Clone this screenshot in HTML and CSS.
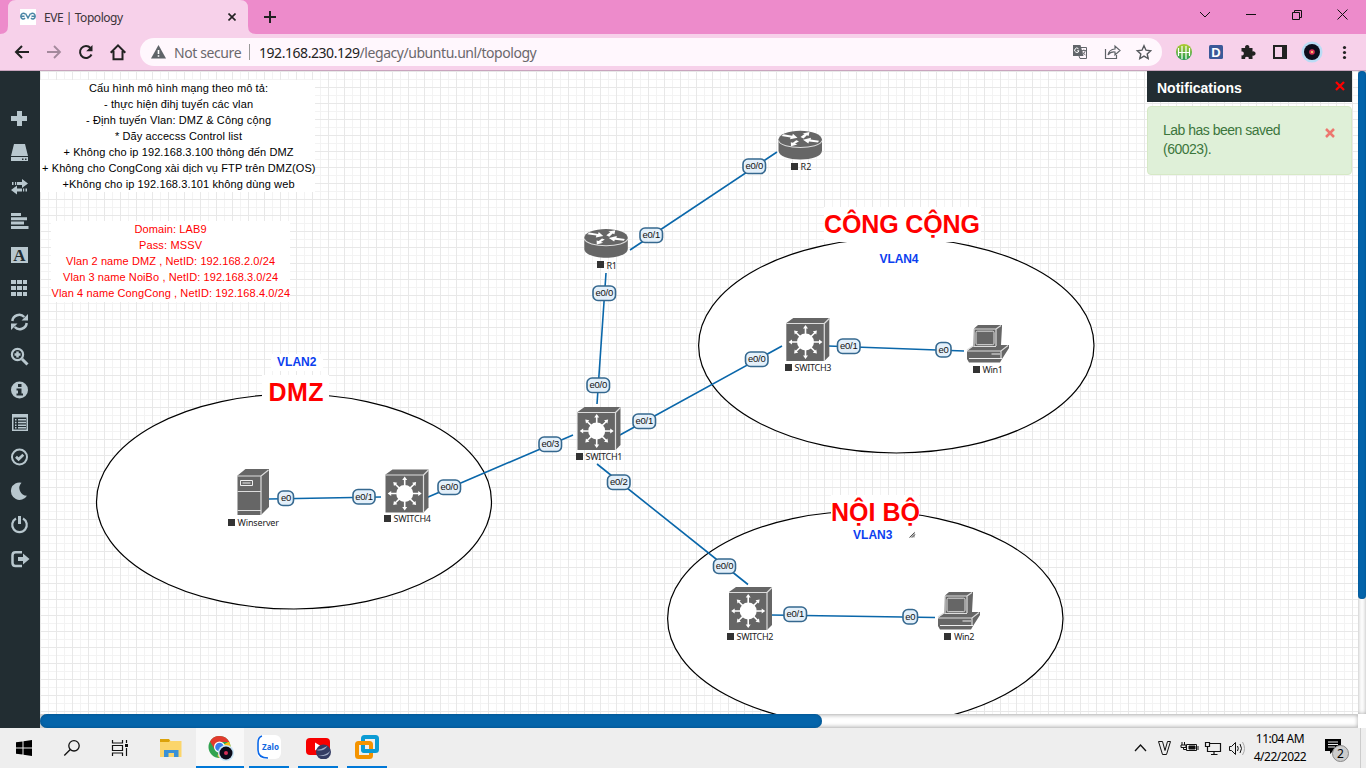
FILE: index.html
```html
<!DOCTYPE html>
<html lang="en">
<head>
<meta charset="utf-8">
<title>EVE | Topology</title>
<link rel="stylesheet" href="styles.css">
</head>
<body>
<div class="tabs">
  <svg class="tab-shape" width="262" height="34" viewBox="0 0 262 34"><path fill="#f7d1ea" d="M0 34q8 0 8-8V8q0-8 8-8h224q8 0 8 8v18q0 8 8 8z"/></svg>
  <div class="tab">
    <svg width="16" height="16" viewBox="0 0 16 16"><path fill="#fff" d="M0 0h16v16H0z"/><g fill="none" stroke="#4a86a5" stroke-width="1.5"><path d="M5.300 5C3 3 .8 5 .8 7.300S3.300 11 5 9M1 7.300h3.500M5.500 4.500 8 9l2.500-4.500M10.700 5c2.300-2 4.500 0 4.500 2.300S12.700 11 11 9M11.500 7.300H15"/></g></svg>
    <span class="tab-title">EVE | Topology</span>
    <svg class="tab-close" width="8" height="8" viewBox="0 0 8 8" stroke="#222" stroke-width="1.6"><path d="m.5.500 7 7M7.500.500l-7 7"/></svg>
  </div>
  <svg class="new-tab" width="12" height="12" viewBox="0 0 12 12" stroke="#222" stroke-width="2"><path d="M6 0v12M0 6h12"/></svg>
  <svg class="win-controls" width="150" height="16" viewBox="0 0 150 16" fill="none" stroke="#111"><path d="m1 3 5 5 5-5M47 5.500h10M93.500 3.500h7v7h-7zM95.500 3.500v-2h7v7h-2M138.500.5l10 10M148.500.5l-10 10"/></svg>
</div>
<div class="toolbar">
  <div class="nav">
    <svg width="16" height="16" viewBox="0 0 16 16" fill="none" stroke="#222" stroke-width="2"><path d="M15 8H2M8 2 2 8l6 6"/></svg>
    <svg width="16" height="16" viewBox="0 0 16 16" fill="none" stroke="#a3899c" stroke-width="1.800"><path d="M1 8h13M8 2l6 6-6 6"/></svg>
    <svg width="16" height="16" viewBox="0 0 16 16"><path fill="none" stroke="#222" stroke-width="2" d="M13.500 10.500A6 6 0 1 1 12.500 4"/><path fill="#222" d="M14.500 1v6.300H8.200z"/></svg>
    <svg width="16" height="18" viewBox="0 0 16 18" fill="none" stroke="#222" stroke-width="2"><path d="M.7 9.700 8 2.300l7.300 7.400M3.500 8v8.200h9V8"/></svg>
  </div>
  <div class="address">
    <svg width="15" height="14" viewBox="0 0 15 14"><path fill="#5f6368" d="M7.500 0 15 13.500H0z"/><path fill="#fff" d="M6.700 5h1.600v4H6.700zM6.700 10.200h1.600v1.600H6.700z"/></svg>
    <span class="secure">Not secure</span><span class="divider"></span>
    <span class="url"><b>192.168.230.129</b>/legacy/ubuntu.unl/topology</span>
    <svg class="addr-icons" width="80" height="16" viewBox="0 0 80 16"><path fill="#62656a" d="M1 1h7.500l3 11H1z"/><path d="M9 3.500h5.500v11H8l-1-2.500" fill="none" stroke="#62656a"/><path d="M6.500 4.800a2.200 2.200 0 1 0 .5 2H5.200" fill="none" stroke="#fff"/><path d="M9.500 6.500H14M11.800 5.500v1M13.200 6.500c0 2-1.800 3.800-3 4.500M10.500 7.500c.5 1.500 1.500 3 3 3.500" fill="none" stroke="#62656a" stroke-width=".9"/><path d="M33.500 5v9.500h11V11M36 11q1-5.500 7-6V2l5 4.500-5 4.500V8q-4.500-.5-7 3z" fill="none" stroke="#5f6368" stroke-width="1.200"/><path d="m72 1.800 2 4.400 4.700.5-3.500 3.200 1 4.600-4.200-2.400-4.200 2.400 1-4.600-3.500-3.200 4.700-.5z" fill="none" stroke="#55585c" stroke-width="1.400"/></svg>
  </div>
  <svg class="extensions" width="180" height="24" viewBox="0 0 180 24">
    <defs><linearGradient id="lime" x1="0" y1="0" x2="0" y2="1"><stop stop-color="#b2cd31"/><stop offset="1" stop-color="#219b51"/></linearGradient></defs>
    <circle cx="12" cy="12" r="8" fill="url(#lime)"/><path d="M6.500 8v8M10 6v13M14 6v13M17.500 8v8M6.500 12.500h11" stroke="#fff" stroke-width="1.200" fill="none"/>
    <rect x="37" y="5" width="14" height="14" rx="1.500" fill="#3b5998"/><text x="44" y="16.500" text-anchor="middle" class="ext-letter">D</text>
    <path fill="#222" d="M70 8h3.200a2.200 2.200 0 1 1 4 0h3.300v3.500a2.200 2.200 0 1 1 0 4V19h-3.800a1.800 1.800 0 1 0-3.500 0H69.500v-3.700a1.900 1.900 0 1 0 0-3.700V8z"/>
    <path d="M102 6h12v12h-12z" fill="#f7d1ea" stroke="#222" stroke-width="2"/><path d="M110 5h5v14h-5z" fill="#222"/>
    <circle cx="140" cy="12" r="10.500" fill="#badcf5"/><circle cx="140" cy="12" r="8" fill="#0d0d1c"/><circle cx="140" cy="12" r="2.800" fill="#db3157"/><circle cx="140" cy="12" r="1" fill="#ffe36d"/>
    <g fill="#222"><circle cx="172.500" cy="7.500" r="1.600"/><circle cx="172.500" cy="12.500" r="1.600"/><circle cx="172.500" cy="17.500" r="1.600"/></g>
  </svg>
</div>
<div class="workspace">
  <aside class="sidebar">
    <svg viewBox="0 0 18 18"><path d="M7 1h5v5h5v5h-5v5H7v-5H1V6h6z"/></svg>
    <svg viewBox="0 0 18 18"><path d="M4 0h11l3 12H1zM1 13h17v4H1z"/><path d="M12 14.500h1.500V16H12zM15 14.500h1.500V16H15z" fill="#222d32"/></svg>
    <svg viewBox="0 0 18 18"><path d="M12 1 18 5.500 12 10V7H7V4h5zM5 4h1.200v3H5zM2 4h1.500v3H2zM7 7.500 1 12l6 4.500V13.500h5v-3H7zM13 10.500h1.200v3H13zM15.500 10.500H17v3h-1.500z"/></svg>
    <svg viewBox="0 0 18 18"><path d="M1 1h10v3H1zM1 5.300h16v3H1zM1 9.600h13v3H1zM1 14h17.500v3H1z"/></svg>
    <svg viewBox="0 0 18 18"><path d="M1 1h17v16H1z"/><text x="9.500" y="15" text-anchor="middle" class="font-letter">A</text></svg>
    <svg viewBox="0 0 18 18"><path d="M1 1h5v4H1zM7 1h5v4H7zM13 1h4v4h-4zM1 7h5v4H1zM7 7h5v4H7zM13 7h4v4h-4zM1 13h5v4H1zM7 13h5v4H7zM13 13h4v4h-4z"/></svg>
    <svg viewBox="0 0 18 18"><g fill="none" stroke="#b8c7ce" stroke-width="2.500"><path d="M2.300 8a7 7 0 0 1 12-4M16.700 10a7 7 0 0 1-12 4"/></g><path d="M18 1v6.500h-6.500zM1 17v-6.500h6.500z"/></svg>
    <svg viewBox="0 0 18 18"><g fill="none" stroke="#b8c7ce"><circle cx="7.500" cy="7.500" r="5.600" stroke-width="2.200"/><path d="m12 12 5.500 5.500" stroke-width="3"/><path d="M4.500 7.500h6M7.500 4.500v6" stroke-width="2.500"/></g></svg>
    <svg viewBox="0 0 18 18"><circle cx="9.500" cy="9" r="8.500"/><path fill="#222d32" d="M8 3h3.500v3H8zM6.500 7.500h5v5H13v2H6.500v-2H8v-3H6.500z"/></svg>
    <svg viewBox="0 0 18 18"><path fill-rule="evenodd" d="M2 0h16v17H2zM3.500 3.500v12h13v-12z"/><path d="M5 5h1.500v1.500H5zM8 5h8v1.500H8zM5 7.700h1.500v1.500H5zM8 7.700h8v1.500H8zM5 10.400h1.500v1.500H5zM8 10.400h8v1.500H8zM5 13h1.500v1.500H5zM8 13h8v1.500H8z"/></svg>
    <svg viewBox="0 0 18 18"><g fill="none" stroke="#b8c7ce"><circle cx="9.500" cy="9" r="7.500" stroke-width="2"/><path d="m6 8.700 2.600 2.600 4.700-4.600" stroke-width="2.700"/></g></svg>
    <svg viewBox="0 0 18 18"><path d="M11.500.7a8.700 8.700 0 1 0 5.500 13A7.700 7.700 0 0 1 11.500.7z"/></svg>
    <svg viewBox="0 0 18 18"><g fill="none" stroke="#b8c7ce" stroke-width="2.200"><path d="M6 2.500a7.300 7.300 0 1 0 7 0"/><path d="M9.500 0v8" stroke-width="3"/></g></svg>
    <svg viewBox="0 0 18 18"><path d="M12 2.300H5.500q-3 0-3 3V13q0 3 3 3H12" fill="none" stroke="#b8c7ce" stroke-width="2.500"/><path d="M8 7h5V3.500L19.500 9 13 14.500V11H8z"/></svg>
  </aside>
  <main class="board">
    <svg class="topology" width="1318" height="643" viewBox="40 71 1318 643">
      <defs>
        <pattern id="grid" x="0" y="7" width="16" height="16" patternUnits="userSpaceOnUse"><path d="M0 8h16v1H0zM0 0h1v16H0z" fill="#f3f3f3"/><path d="M0 0h16v1H0zM8 0h1v16H8z" fill="#e8e8e8"/></pattern>
        <symbol id="switch" viewBox="0 0 43 43" overflow="visible">
          <path d="M0 5 7 0h36v38l-5 5H0z" fill="#666"/><path d="M0 5.500h38V43M38 5.500 43 .5" fill="none" stroke="#ddd" stroke-width="1.200"/>
          <g transform="translate(19.200 24)" fill="#fff"><circle r="8.500"/><g id="cross"><path d="M-.8-8h1.600v-5.500h1.700L0-17l-2.500 3.500h1.700z"/><path d="M-.8 8h1.600v5.500h1.700L0 17l-2.500-3.500h1.700z"/><path d="M8-.8v1.600h5.500v1.700L17 0l-3.500-2.500v1.700z"/><path d="M-8-.8v1.600h-5.500v1.700L-17 0l3.500-2.500v1.700z"/></g><use href="#cross" transform="rotate(45) scale(.95)"/></g>
        </symbol>
        <symbol id="router" viewBox="0 0 44 30" overflow="visible">
          <path d="M0 9v11c0 12 43.500 12 43.500 0V9z" fill="#666"/><ellipse cx="21.700" cy="9" rx="21.700" ry="8.700" fill="#666"/><path d="M0 10c2 9.300 41.500 9.300 43.500 0" fill="none" stroke="#ddd" stroke-width="1.100"/>
          <path fill="#fff" d="m5 3.800 8.800 1.500.6-2L19 7.200l-7.500 1.500.6-1.800L3 5.500zM39.500 12l-9-1-.6 1.900-5.400-3.700 8-1.900-.4 1.800 8.400 1.200zM22 6.500l4-3-2-.6 7-1.400-.9 4-1.700-.8L25 8zM20.500 10.800l-4 2.500 2.500.8-6.500 1.600-.2-4 2.100.6 3.300-2.500z"/>
        </symbol>
        <symbol id="pc" viewBox="0 0 42 38" overflow="visible">
          <path d="M7 3.500 11 0h24v2l-1 18h8v3L35 34l-2 3.500H2L0 34v-8l6-5z" fill="#666"/>
          <path d="M7 4h22v17M29 4l5-3.500M0 26h34l7-5.500M34 26v8M7 4v17.500h22M0 25l6-4" fill="none" stroke="#ddd" stroke-width="1.200"/><rect x="9" y="6.200" width="18" height="13.500" rx="1.500" fill="none" stroke="#ddd"/><path d="M2 33.500h33M24.500 29H33" stroke="#eee" stroke-width="1.200"/>
        </symbol>
        <symbol id="server" viewBox="0 0 32 46" overflow="visible">
          <path d="M.5 6.500 8.500 0H32v38l-8 8H.5z" fill="#666"/><path d="M.5 7H24v39M24 7l7.500-6M.5 22.500H24M.5 41.500H24" fill="none" stroke="#ddd" stroke-width="1.200"/><path d="M3.500 11.500h12v5h-12zM5.500 14h8" fill="none" stroke="#eee"/>
        </symbol>
      </defs>
      <path fill="#fff" d="M40 71h1318v643H40z"/><path fill="url(#grid)" d="M40 71h1318v643H40z"/>
      <g fill="#fff" stroke="#000" stroke-width="1.200"><ellipse cx="294" cy="501.500" rx="197.500" ry="107.500"/><ellipse cx="896.300" cy="345.500" rx="197.700" ry="107.500"/><ellipse cx="865.300" cy="618.500" rx="197.700" ry="107.500"/></g>
      <path fill="#fff" d="M40 80h275v112H40zM51 221h239v81H51zM262 375h67v35h-67zM824 207h157v35H824zM831 495h88v35h-88zM271 354h52v17h-52z"/>
      <g class="note">
        <text x="89" y="92" textLength="179">Cấu hình mô hình mạng theo mô tả:</text>
        <text x="104" y="108" textLength="149">- thực hiện đihj tuyến các vlan</text>
        <text x="86" y="124" textLength="185">- Định tuyến Vlan: DMZ &amp; Công cộng</text>
        <text x="115" y="140" textLength="127">* Dãy accecss Control list</text>
        <text x="63.500" y="156" textLength="230">+ Không cho ip 192.168.3.100 thông đến DMZ</text>
        <text x="42" y="172" textLength="273.500">+ Không cho CongCong xài dịch vụ FTP trên DMZ(OS)</text>
        <text x="62.500" y="188" textLength="232">+Không cho ip 192.168.3.101 không dùng web</text>
      </g>
      <g class="note red">
        <text x="134.500" y="233" textLength="72">Domain: LAB9</text>
        <text x="139" y="249" textLength="63">Pass: MSSV</text>
        <text x="66" y="265" textLength="209">Vlan 2 name DMZ , NetID: 192.168.2.0/24</text>
        <text x="63" y="281" textLength="215">Vlan 3 name NoiBo , NetID: 192.168.3.0/24</text>
        <text x="51.500" y="297" textLength="238.500">Vlan 4 name CongCong , NetID: 192.168.4.0/24</text>
      </g>
      <g class="zone"><text x="268.500" y="401" textLength="55">DMZ</text><text x="824" y="233" textLength="156">CÔNG CỘNG</text><text x="831" y="521" textLength="89">NỘI BỘ</text></g>
      <g class="vlan"><text x="277" y="366" textLength="39.500">VLAN2</text><text x="879.500" y="263" textLength="39">VLAN4</text><text x="853" y="539" textLength="39.500">VLAN3</text></g>
      <path d="m909 537.500 6-6v6z" fill="#bbb"/><path d="m909.500 537.500 5-5M912 537.500l3-3" stroke="#555"/>
      <g stroke="#0a67aa" stroke-width="1.600"><path d="M777 152 630 250M606 273 597 404M619 435.500 782 346M828 346 964 351M573 435 427 497.500M381 497 269 499M597 464 748 584.500M771 615 935 617.500"/></g>
      <use href="#router" x="778.500" y="130.500" width="44" height="30"/><use href="#router" x="584.300" y="228.700" width="44" height="30"/>
      <use href="#switch" x="577.500" y="407" width="43" height="43"/><use href="#switch" x="786.300" y="318" width="43" height="43"/><use href="#switch" x="385.500" y="469.500" width="43" height="43"/><use href="#switch" x="729" y="587" width="43" height="43"/>
      <use href="#pc" x="967" y="325" width="42" height="38"/><use href="#pc" x="938" y="592" width="42" height="38"/><use href="#server" x="237" y="469" width="32" height="46"/>
      <path fill="#333" d="M791 163h7v7h-7zM597 261h7v7h-7zM576 453h7v7h-7zM785 364h7v7h-7zM973 366h7v7h-7zM228 519h7v7h-7zM384 515h7v7h-7zM727 633h7v7h-7zM944 633h7v7h-7z"/>
      <g class="node-name"><text x="800.500" y="170" textLength="11">R2</text><text x="606.500" y="269" textLength="10.500">R1</text><text x="585.500" y="460" textLength="37">SWITCH1</text><text x="794.500" y="371" textLength="37">SWITCH3</text><text x="982.500" y="373" textLength="20.500">Win1</text><text x="237.500" y="526" textLength="41.500">Winserver</text><text x="393.500" y="522" textLength="37.500">SWITCH4</text><text x="736.500" y="640" textLength="37">SWITCH2</text><text x="954" y="640" textLength="20.500">Win2</text></g>
      <g fill="#e4f0fa" stroke="#35688f" stroke-width="1.600">
        <rect x="743" y="159" width="22.500" height="14.500" rx="5"/><rect x="640" y="228" width="22.500" height="14.500" rx="5"/><rect x="593" y="286" width="22.500" height="14.500" rx="5"/><rect x="587" y="378" width="22.500" height="14.500" rx="5"/><rect x="633" y="414" width="22.500" height="14.500" rx="5"/><rect x="745.500" y="352" width="22.500" height="14.500" rx="5"/><rect x="837.500" y="339" width="22.500" height="14.500" rx="5"/><rect x="936" y="342.500" width="15" height="14.500" rx="5"/><rect x="539" y="437" width="22.500" height="14.500" rx="5"/><rect x="438" y="480" width="22.500" height="14.500" rx="5"/><rect x="353" y="489.500" width="22" height="14.500" rx="5"/><rect x="278" y="491" width="15.500" height="14.500" rx="5"/><rect x="607.500" y="475" width="22.500" height="14.500" rx="5"/><rect x="713.500" y="559" width="22" height="14.500" rx="5"/><rect x="784" y="607" width="22.500" height="14.500" rx="5"/><rect x="903" y="609.500" width="14.500" height="14.500" rx="5"/>
      </g>
      <g class="port"><text x="754.300" y="169">e0/0</text><text x="651.300" y="238">e0/1</text><text x="604.300" y="296">e0/0</text><text x="598.300" y="388">e0/0</text><text x="644.300" y="424">e0/1</text><text x="756.800" y="362">e0/0</text><text x="848.800" y="349">e0/1</text><text x="943.500" y="353">e0</text><text x="550.300" y="447">e0/3</text><text x="449.300" y="490">e0/0</text><text x="364" y="500">e0/1</text><text x="286" y="501">e0</text><text x="618.800" y="485">e0/2</text><text x="724.500" y="569">e0/0</text><text x="795.300" y="617">e0/1</text><text x="910.300" y="620">e0</text></g>
    </svg>
    <div class="h-scroll"><div class="h-thumb"></div></div>
    <section class="notifications">
      <header class="notice-head">Notifications<svg width="10" height="10" viewBox="0 0 10 10"><path d="m1 1 8 8M9 1 1 9" stroke="red" stroke-width="2.300"/></svg></header>
      <div class="notice"><span>Lab has been saved<br>(60023).</span><svg width="10" height="10" viewBox="0 0 10 10"><path d="m1 1 8 8M9 1 1 9" stroke="#ed776f" stroke-width="2.500"/></svg></div>
    </section>
  </main>
  <div class="v-scroll"><div class="v-thumb"></div></div>
</div>
<footer class="taskbar">
  <div class="task"><svg width="16" height="16" viewBox="0 0 16 16"><path d="m0 2.300 6.500-.9v6.100H0zM7.500 1.200 16 0v7.500H7.500zM0 8.500h6.500v6.100L0 13.700zM7.500 8.500H16V16l-8.500-1.200z"/></svg></div>
  <div class="task"><svg width="18" height="18" viewBox="0 0 18 18" fill="none" stroke="#111" stroke-width="1.300"><circle cx="11" cy="6.800" r="5.200"/><path d="m7.300 10.500-6 6"/></svg></div>
  <div class="task"><svg width="18" height="18" viewBox="0 0 18 18" fill="none" stroke="#111"><path d="M1.500 1v3h10V1M1.500 17v-3h10v3M1.500 6.500h10v5h-10zM15.500 1v3M15.500 9v8" stroke-width="1.200"/><path d="M14 5h3v3h-3z" fill="#111" stroke="none"/></svg></div>
  <div class="task files"><svg width="22" height="19" viewBox="0 0 22 19"><path fill="#fbd56b" d="M0 1h9l2 1h10.500v16H0z"/><path fill="#dba20a" d="M0 0h9l1 1.500L9 3H0z"/><path fill="#3a91d7" d="M4 18v-7h14.500v7H14v-4H8.500v4z"/></svg></div>
  <div class="task chrome"><svg width="28" height="28" viewBox="0 0 28 28"><circle cx="13.500" cy="14" r="11" fill="#31a350"/><path fill="#fbc116" d="M13.500 14 23 8.500A11 11 0 0 1 13.500 25l-2-2z"/><path fill="#e33b2e" d="M4 8.500A11 11 0 0 1 23.300 9H13.500l-5 7z"/><circle cx="13.500" cy="14" r="5.500" fill="#fff"/><circle cx="13.500" cy="14" r="4.300" fill="#3a7cec"/><circle cx="20" cy="20" r="8" fill="#c8e4f5"/><circle cx="20" cy="20" r="6.500" fill="#0b0b1a"/><circle cx="20" cy="20" r="2" fill="#d52c56"/></svg></div>
  <div class="task active"><svg width="24" height="24" viewBox="0 0 24 24"><rect width="24" height="24" rx="6" fill="#fff"/><path d="M5 1Q1 2 1 8v7q0 8 10 8" fill="none" stroke="#0b68e8" stroke-width="1.600"/><text x="13.500" y="14.500" textLength="17" text-anchor="middle" class="zalo">Zalo</text></svg></div>
  <div class="task active"><svg width="26" height="24" viewBox="0 0 26 24"><rect x="1" y="3" width="24" height="17" rx="4" fill="#f70000"/><path d="m10 7.500 6.500 4L10 15.500z" fill="#fff"/><circle cx="18.500" cy="17" r="7.500" fill="#343c64"/><path d="M11.500 15q6-1 11-4-4 6-11 4zM13 20q8 1 12-4-2 7-12 4z" fill="#a0abc7"/></svg></div>
  <div class="task active"><svg width="24" height="24" viewBox="0 0 24 24" fill="none" stroke-width="4"><rect x="8" y="2" width="14" height="14" rx="1.500" stroke="#0b9bd4"/><rect x="2" y="8" width="14" height="14" rx="1.500" stroke="#f49300"/><path d="M8 11v3q0 2 2 2h8" stroke="#0b9bd4"/></svg></div>
  <svg class="tray" width="112" height="20" viewBox="0 0 112 20" fill="none" stroke="#111">
    <path d="m1 13 5.500-6 5.500 6" stroke-width="1.300"/><path d="M24.500 3.500h4l2.500 9 2.500-9h3l-4 13h-4z"/>
    <path d="M52.500 6.500h10v6h-10zM64 8v4M48 4v3M50.500 4v3M47 7h5v2.500h-5zM49.500 9.500v2h3"/><path d="M55 8h6v3h-6z" fill="#111"/>
    <path d="M75.500 5.500h11v8h-13v-5M80 13.500v3M77 16.500h6.500M71.500 4.500h4v4h-4z" stroke-width="1.200"/>
    <path d="M95.500 8.500h2l4-4v12l-4-4h-2zM103.500 8q1.500 2.500 0 5M106 6q3 4.500 0 9"/><path d="M108.500 4q4 6.500 0 13" stroke="#aaa"/>
  </svg>
  <div class="clock"><span>11:04 AM</span><span>4/22/2022</span></div>
  <svg class="action" width="26" height="28" viewBox="0 0 26 28"><path d="M1 5h16v12H9l-3 3v-3H1z"/><path d="M4 8h10M4 10.500h10M4 13h7" stroke="#eee" stroke-width="1.200"/><circle cx="16.500" cy="19.500" r="8" fill="#ccc" stroke="#888"/><text x="16.500" y="24" text-anchor="middle" class="badge">2</text></svg>
  <span class="show-desktop"></span>
</footer>
</body>
</html>
```
FILE: styles.css
```css
* { box-sizing: border-box; }
body { margin: 0; width: 1366px; height: 768px; overflow: hidden; display: flex; flex-direction: column; font-family: "Liberation Sans", Arial, sans-serif; }
svg { display: block; flex: none; }
.tabs { height: 34px; background: #ed8bcb; display: grid; grid-template-columns: 262px 1fr 162px; align-items: center; }
.tab-shape, .tab { grid-area: 1 / 1; }
.tab { display: flex; align-items: center; padding-left: 20px; font: 12px "Noto Sans", sans-serif; color: #3c3439; }
.tab-title { margin-left: 8px; width: 184px; letter-spacing: -.45px; }
.new-tab { margin-left: 2px; }
.win-controls { grid-column: 3; margin-left: -5px; }
.toolbar { height: 37px; background: #f7d1ea; border-bottom: 1px solid #c8a4bd; display: flex; align-items: center; }
.nav { display: flex; align-items: center; gap: 16px; padding-left: 14px; width: 140px; flex: none; }
.address { width: 1022px; height: 28px; border-radius: 14px; background: #fff7fd; display: flex; align-items: center; padding-left: 11px; font: 14px "Noto Sans", sans-serif; color: #6b686c; }
.secure { margin-left: 8px; width: 75px; letter-spacing: -.4px; white-space: nowrap; flex: none; }
.divider { width: 1px; height: 16px; background: #999; margin-right: 9px; }
.url { width: 813px; letter-spacing: -.45px; }
.url b { font-weight: 400; color: #222; }
.extensions { margin-left: 10px; }
.ext-letter { font: bold 13px "Liberation Sans", sans-serif; fill: #fff; }
.workspace { height: 657px; display: flex; }
.sidebar { width: 40px; background: #222d32; padding: 31.500px 0 0 10px; flex: none; display: flex; flex-direction: column; }
.sidebar svg { width: 18px; height: 18px; margin: 7.9px 0; fill: #b8c7ce; overflow: visible; }
.font-letter { font: bold 17px "Liberation Serif", serif; fill: #222d32; }
.board { position: relative; width: 1318px; }
.note { font-size: 11px; fill: #000; }
.red { fill: red; }
.zone { font-size: 25px; font-weight: bold; fill: red; }
.vlan { font-size: 12px; font-weight: bold; fill: #0b40ef; }
.node-name { font: 9px "Noto Sans", sans-serif; fill: #222; }
.port { font-size: 9.5px; text-anchor: middle; fill: #111; letter-spacing: -.2px; }
.h-scroll { height: 14px; background: #fff; border: solid #ccc; border-width: 1px 0; box-shadow: inset 0 0 4px #aaa; }
.h-thumb { width: 782px; height: 14px; margin-top: -1px; border-radius: 7px; background: #0464aa; box-shadow: inset 0 0 3px #064e80; }
.v-scroll { width: 8px; height: 643px; background: #fff; box-shadow: inset 0 0 4px #aaa; }
.v-thumb { height: 528px; border-radius: 4px; background: #0464aa; box-shadow: inset 0 0 2px #064e80; }
.notifications { position: absolute; right: 6px; top: 0; width: 205px; }
.notice-head { height: 31px; background: #222d32; color: #fff; font-size: 14px; font-weight: bold; display: flex; justify-content: space-between; padding: 9px 7px 0 10px; }
.notice-head svg { margin-top: 1px; }
.notice { height: 69px; margin-top: 4px; border: 1px solid #d6e9c6; border-radius: 4px; background: #dff0d8; color: #3c763d; display: flex; justify-content: space-between; padding: 14px 16px 14px 15px; font-size: 14px; line-height: 19px; letter-spacing: -.5px; }
.notice svg { margin-top: 7px; }
.taskbar { height: 40px; background: #eee; display: flex; align-items: center; }
.task { width: 48px; height: 40px; display: flex; align-items: center; justify-content: center; }
.files { width: 52px; padding-left: 1px; }
.chrome { background: #f8f8f8; border-bottom: 2px solid #0078d7; }
.active { width: 40px; margin-left: 5px; margin-right: 4px; border-bottom: 2px solid #0078d7; }
.zalo { font: bold 8px "Noto Sans", sans-serif; fill: #1267df; }
.tray { margin-left: auto; }
.clock { width: 78px; padding-right: 10px; display: flex; flex-direction: column; align-items: center; font: 12px/18px "Noto Sans", sans-serif; letter-spacing: -.5px; }
.badge { font: 12px "Noto Sans", sans-serif; }
.show-desktop { width: 1px; height: 40px; background: #ccc; margin: 0 5px 0 10px; }
```
